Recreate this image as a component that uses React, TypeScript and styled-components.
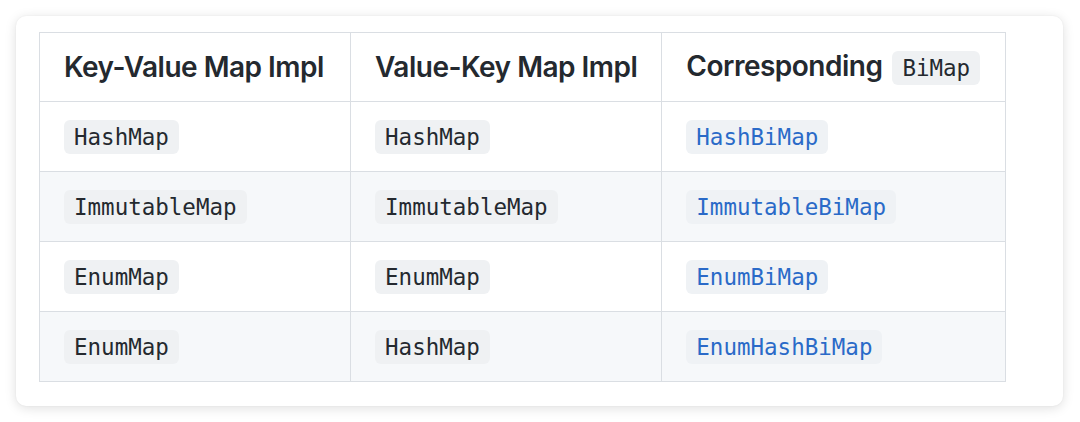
import React from "react";
import styled, { createGlobalStyle } from "styled-components";

const Global = createGlobalStyle`
  html, body { margin: 0; padding: 0; background: #ffffff; }
  body { width: 1080px; height: 422px; overflow: hidden; }
`;

const Page = styled.div`
  padding: 16px 17px 16px 16px;
  box-sizing: border-box;
  width: 1080px;
  height: 422px;
`;

const Card = styled.div`
  background: #ffffff;
  border-radius: 10px;
  box-shadow: 0 2px 12px rgba(0, 0, 0, 0.13), 0 0 2px rgba(0, 0, 0, 0.06);
  padding: 16px 57px 24px 23px;
  height: 390px;
  box-sizing: border-box;
`;

const Table = styled.table`
  border-collapse: collapse;
  border-spacing: 0;
  width: 967px;
  font-family: Inter, "Liberation Sans", sans-serif;
  color: #24292f;
`;

const Row = styled.tr<{ $striped?: boolean }>`
  background: ${(p) => (p.$striped ? "#f6f8fa" : "#ffffff")};
`;

const Th = styled.th<{ $w: number }>`
  width: ${(p) => p.$w}px;
  height: 69px;
  box-sizing: border-box;
  border: 1px solid #dadee3;
  padding: 0 24px;
  text-align: left;
  font-size: 28px;
  font-weight: 600;
  letter-spacing: -0.5px;
  white-space: nowrap;
  vertical-align: middle;
`;

const Td = styled.td`
  height: 70px;
  box-sizing: border-box;
  border: 1px solid #dadee3;
  padding: 0 24px;
  vertical-align: middle;
`;

const Code = styled.code<{ $link?: boolean }>`
  display: inline-block;
  font-family: "DejaVu Sans Mono", "Liberation Mono", monospace;
  font-size: 22.5px;
  line-height: 34px;
  padding: 0 10px;
  border-radius: 6px;
  background: ${(p) => (p.$link ? "#eff2f5" : "#eff1f3")};
  color: ${(p) => (p.$link ? "#2a6ac8" : "#24292f")};
  font-weight: 400;
  letter-spacing: 0;
  vertical-align: middle;
`;

const HeadCode = styled(Code)`
  margin-left: 10px;
`;

const rows: [string, string, string][] = [
  ["HashMap", "HashMap", "HashBiMap"],
  ["ImmutableMap", "ImmutableMap", "ImmutableBiMap"],
  ["EnumMap", "EnumMap", "EnumBiMap"],
  ["EnumMap", "HashMap", "EnumHashBiMap"],
];

export default function App() {
  return (
    <>
      <Global />
      <Page>
        <Card>
          <Table>
            <thead>
              <Row>
                <Th $w={312}>Key-Value Map Impl</Th>
                <Th $w={311}>Value-Key Map Impl</Th>
                <Th $w={344}>
                  Corresponding<HeadCode>BiMap</HeadCode>
                </Th>
              </Row>
            </thead>
            <tbody>
              {rows.map((r, i) => (
                <Row key={i} $striped={i % 2 === 1}>
                  <Td>
                    <Code>{r[0]}</Code>
                  </Td>
                  <Td>
                    <Code>{r[1]}</Code>
                  </Td>
                  <Td>
                    <Code $link>{r[2]}</Code>
                  </Td>
                </Row>
              ))}
            </tbody>
          </Table>
        </Card>
      </Page>
    </>
  );
}
